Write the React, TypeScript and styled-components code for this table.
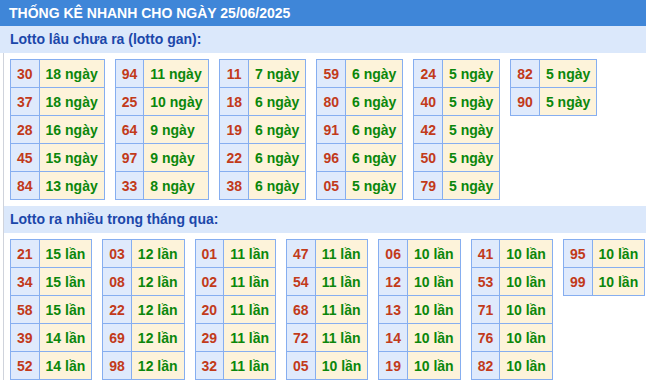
import styled, { createGlobalStyle } from "styled-components";

const GlobalStyle = createGlobalStyle`
  html, body {
    margin: 0;
    padding: 0;
    background: #ffffff;
    overflow: hidden;
  }
  body {
    font-family: "Liberation Sans", Arial, sans-serif;
  }
`;

const Page = styled.div`
  width: 646px;
  height: 380px;
  overflow: hidden;
`;

const Header = styled.div`
  height: 26px;
  background: #3f86d8;
  color: #ffffff;
  font-weight: bold;
  font-size: 14px;
  line-height: 26px;
  padding-left: 9px;
  white-space: nowrap;
`;

const SubHeader = styled.div`
  height: 27px;
  background: #dbe8fb;
  color: #1b47aa;
  font-weight: bold;
  font-size: 14px;
  line-height: 27px;
  padding-left: 10px;
  white-space: nowrap;
`;

const InnerSub = styled(SubHeader)`
  padding-left: 6px;
`;

const Body = styled.div`
  margin-left: 3px;
  border-left: 1px solid #cfd3dc;
`;

const Group = styled.div<{ $top: number; $bottom: number }>`
  display: flex;
  flex-wrap: nowrap;
  align-items: flex-start;
  gap: 10px;
  padding: ${(p) => p.$top}px 0 ${(p) => p.$bottom}px 6px;
`;

const Table = styled.table`
  border-collapse: collapse;
  flex: none;
  font-size: 14px;
  font-weight: bold;
  white-space: nowrap;
`;

const NumCell = styled.td`
  height: 27px;
  padding: 0 6px;
  border: 1px solid #86aef0;
  background: #dfeafc;
  color: #c23a1a;
  text-align: center;
`;

const ValCell = styled.td`
  height: 27px;
  padding: 0 6px;
  border: 1px solid #86aef0;
  background: #fdf3da;
  color: #0b870b;
`;

type Pair = [string, number];

const gan: Pair[][] = [
  [["30", 18], ["37", 18], ["28", 16], ["45", 15], ["84", 13]],
  [["94", 11], ["25", 10], ["64", 9], ["97", 9], ["33", 8]],
  [["11", 7], ["18", 6], ["19", 6], ["22", 6], ["38", 6]],
  [["59", 6], ["80", 6], ["91", 6], ["96", 6], ["05", 5]],
  [["24", 5], ["40", 5], ["42", 5], ["50", 5], ["79", 5]],
  [["82", 5], ["90", 5]],
];

const nhieu: Pair[][] = [
  [["21", 15], ["34", 15], ["58", 15], ["39", 14], ["52", 14]],
  [["03", 12], ["08", 12], ["22", 12], ["69", 12], ["98", 12]],
  [["01", 11], ["02", 11], ["20", 11], ["29", 11], ["32", 11]],
  [["47", 11], ["54", 11], ["68", 11], ["72", 11], ["05", 10]],
  [["06", 10], ["12", 10], ["13", 10], ["14", 10], ["19", 10]],
  [["41", 10], ["53", 10], ["71", 10], ["76", 10], ["82", 10]],
  [["95", 10], ["99", 10]],
];

const LottoTable = ({ rows, unit }: { rows: Pair[]; unit: string }) => (
  <Table>
    <tbody>
      {rows.map(([num, count]) => (
        <tr key={num}>
          <NumCell>{num}</NumCell>
          <ValCell>
            {count} {unit}
          </ValCell>
        </tr>
      ))}
    </tbody>
  </Table>
);

export default function App() {
  return (
    <Page>
      <GlobalStyle />
      <Header>THỐNG KÊ NHANH CHO NGÀY 25/06/2025</Header>
      <SubHeader>Lotto lâu chưa ra (lotto gan):</SubHeader>
      <Body>
        <Group $top={6} $bottom={6}>
          {gan.map((rows, i) => (
            <LottoTable key={i} rows={rows} unit="ngày" />
          ))}
        </Group>
        <InnerSub>Lotto ra nhiều trong tháng qua:</InnerSub>
        <Group $top={6} $bottom={0}>
          {nhieu.map((rows, i) => (
            <LottoTable key={i} rows={rows} unit="lần" />
          ))}
        </Group>
      </Body>
    </Page>
  );
}
